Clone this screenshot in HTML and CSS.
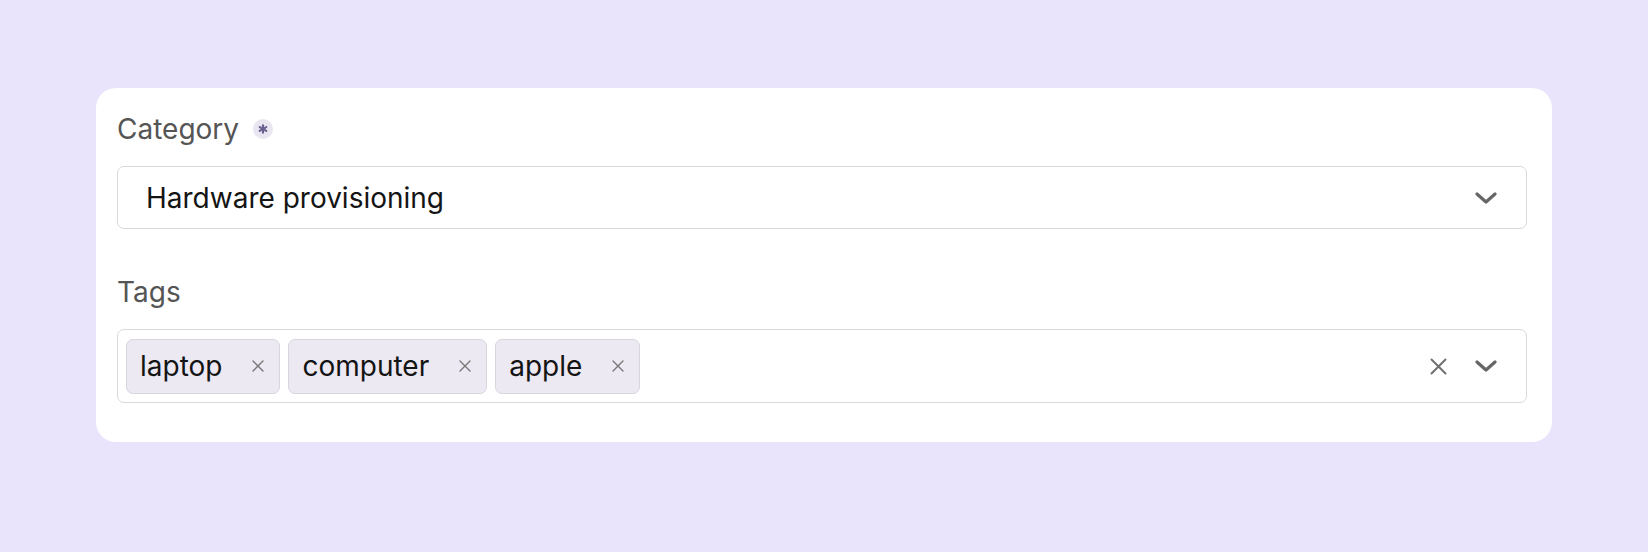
FILE: index.html
```html
<!DOCTYPE html>
<html lang="en">
<head>
<meta charset="utf-8">
<title>Form</title>
<link rel="stylesheet" href="styles.css">
</head>
<body>
<div class="page">
  <div class="card">
    <div class="field">
      <div class="label">
        <span>Category</span>
        <span class="req" aria-label="required">
          <svg width="10" height="10" viewBox="0 0 10 10"><g stroke="#6a6190" stroke-width="2.1" stroke-linecap="round"><line x1="5" y1="1.2" x2="5" y2="8.8"/><line x1="1.7" y1="3.1" x2="8.3" y2="6.9"/><line x1="1.7" y1="6.9" x2="8.3" y2="3.1"/></g></svg>
        </span>
      </div>
      <div class="select">
        <span class="value">Hardware provisioning</span>
        <svg class="chev" width="22" height="12" viewBox="0 0 22 12"><path d="M2 2 L11 10 L20 2" fill="none" stroke="#666" stroke-width="3.2" stroke-linecap="round" stroke-linejoin="round"/></svg>
      </div>
    </div>
    <div class="field tags-field">
      <div class="label"><span>Tags</span></div>
      <div class="tags">
        <div class="pills">
          <span class="pill"><span class="pill-text">laptop</span><svg class="pill-x" width="12" height="12" viewBox="0 0 12 12"><path d="M1 1 L11 11 M11 1 L1 11" stroke="#777" stroke-width="1.4" stroke-linecap="round"/></svg></span>
          <span class="pill"><span class="pill-text">computer</span><svg class="pill-x" width="12" height="12" viewBox="0 0 12 12"><path d="M1 1 L11 11 M11 1 L1 11" stroke="#777" stroke-width="1.4" stroke-linecap="round"/></svg></span>
          <span class="pill"><span class="pill-text">apple</span><svg class="pill-x" width="12" height="12" viewBox="0 0 12 12"><path d="M1 1 L11 11 M11 1 L1 11" stroke="#777" stroke-width="1.4" stroke-linecap="round"/></svg></span>
        </div>
        <div class="actions">
          <svg class="clear" width="17" height="17" viewBox="0 0 17 17"><path d="M1.5 1.5 L15.5 15.5 M15.5 1.5 L1.5 15.5" stroke="#707070" stroke-width="2" stroke-linecap="round"/></svg>
          <svg class="chev" width="22" height="12" viewBox="0 0 22 12"><path d="M2 2 L11 10 L20 2" fill="none" stroke="#666" stroke-width="3.2" stroke-linecap="round" stroke-linejoin="round"/></svg>
        </div>
      </div>
    </div>
  </div>
</div>
</body>
</html>
```
FILE: styles.css
```css
html, body {
  margin: 0;
  padding: 0;
}
body {
  background: #e9e4fc;
  font-family: Inter, "Noto Sans", "Liberation Sans", sans-serif;
  width: 1648px;
  height: 552px;
  overflow: hidden;
}
.page {
  padding: 88px 0 0 96px;
}
.card {
  width: 1456px;
  box-sizing: border-box;
  background: #ffffff;
  border-radius: 20px;
  padding: 21px 25px 39px 21px;
}
.label {
  display: flex;
  align-items: center;
  gap: 14px;
  height: 38px;
  box-sizing: border-box;
  padding-top: 2px;
  font-size: 28px;
  color: #555555;
}
.req {
  width: 20px;
  height: 20px;
  border-radius: 50%;
  background: #e9e6f1;
  display: flex;
  align-items: center;
  justify-content: center;
}
.req svg {
  display: block;
}
.select {
  margin-top: 19px;
  height: 63px;
  box-sizing: border-box;
  border: 1px solid #d9d8dc;
  border-radius: 7px;
  display: flex;
  align-items: center;
  justify-content: space-between;
  padding: 0 29px 0 28px;
  font-size: 28px;
  color: #141414;
}
.chev {
  display: block;
}
.tags-field {
  margin-top: 43px;
}
.tags {
  margin-top: 19px;
  height: 74px;
  box-sizing: border-box;
  border: 1px solid #d9d8dc;
  border-radius: 7px;
  display: flex;
  align-items: center;
  justify-content: space-between;
  padding: 0 29px 0 8px;
}
.pills {
  display: flex;
  gap: 8px;
}
.pill {
  height: 55px;
  box-sizing: border-box;
  display: flex;
  align-items: center;
  background: #ece9f3;
  border: 1px solid #d8d5de;
  border-radius: 7px;
  padding: 0 15px 0 13px;
  font-size: 28px;
  color: #141414;
}
.pill-x {
  display: block;
  margin-left: 30px;
}
.actions {
  display: flex;
  align-items: center;
  gap: 28px;
}
.clear {
  display: block;
}
```
